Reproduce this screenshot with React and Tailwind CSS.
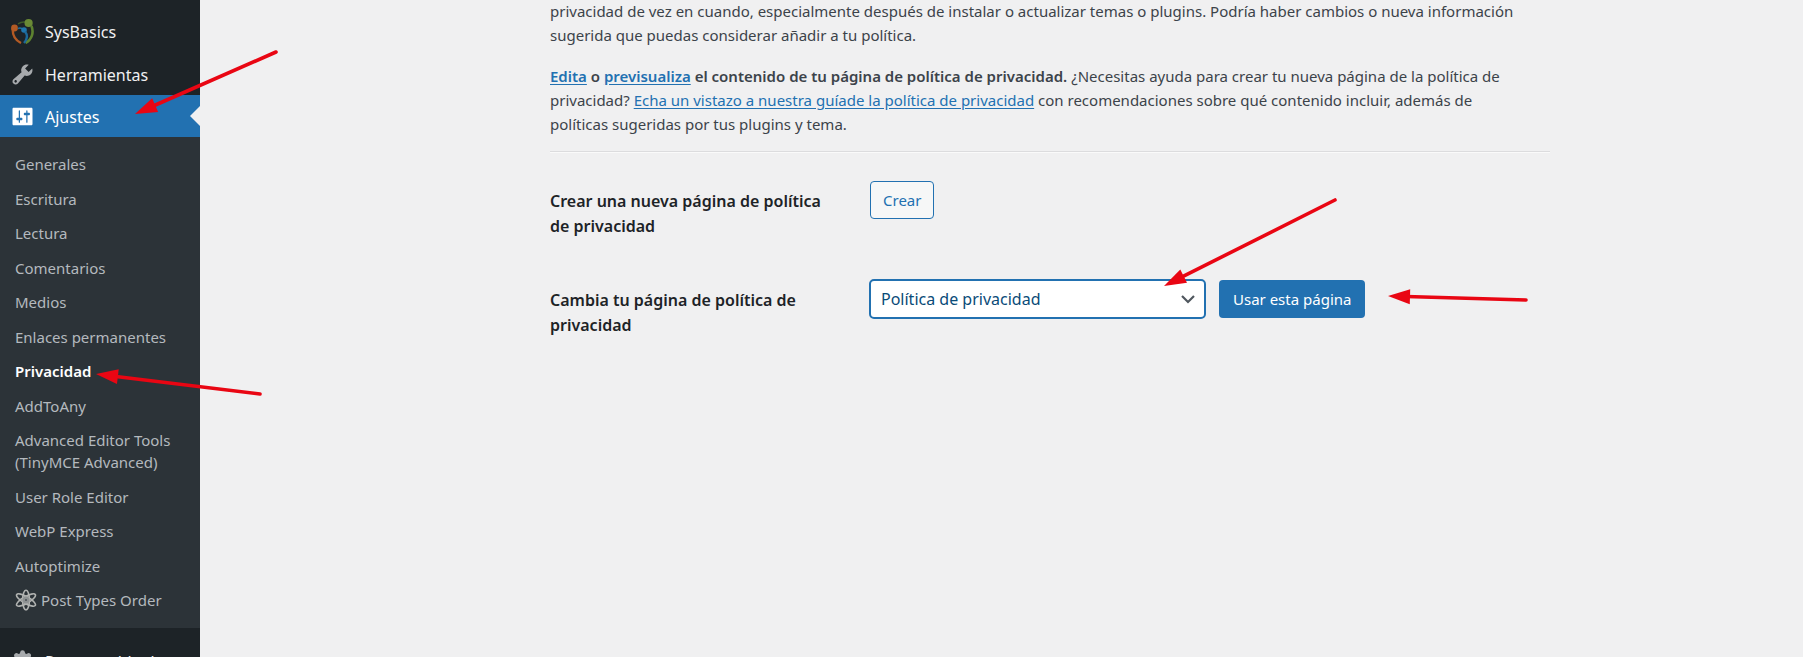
import React from 'react';

const submenu = [
  'Generales', 'Escritura', 'Lectura', 'Comentarios', 'Medios', 'Enlaces permanentes', 'Privacidad', 'AddToAny',
  'Advanced Editor Tools (TinyMCE Advanced)', 'User Role Editor', 'WebP Express', 'Autoptimize', 'Post Types Order',
];

function SysBasicsIcon() {
  return (
    <svg viewBox="0 0 24 26" className="h-[26px] w-6 shrink-0" fill="none" aria-hidden="true">
      <path d="M2.800 10C2.200 16.500 5 22 11 25" stroke="#b35a24" strokeWidth="2.400" />
      <circle cx="4.500" cy="10" r="3.400" fill="#b35a24" />
      <path d="M8 5.800C10.500 4.200 13.500 3.600 16 4.200" stroke="#3d5a2a" strokeWidth="1.500" />
      <circle cx="18.600" cy="5" r="4.100" fill="#6a8a35" />
      <path d="M21.500 8C24 14.500 22 21.500 15.500 25" stroke="#5d8230" strokeWidth="2.600" />
      <path d="M8 10.500C9.500 9.800 11 10 12.500 10.700" stroke="#1f6fa0" strokeWidth="1.500" />
      <circle cx="14" cy="12" r="2.800" fill="#2077ae" />
      <path d="M15 13.500C17.800 17 17.500 21 14 25" stroke="#1c689a" strokeWidth="2.400" />
    </svg>
  );
}

function WrenchIcon() {
  return (
    <svg viewBox="0 0 20 20" className="size-[25px] shrink-0 fill-[#a7aaad]" aria-hidden="true">
      <path d="M16.680 9.770c-1.340 1.340-3.300 1.670-4.950.990l-5.410 6.520c-.990.990-2.590.990-3.580 0s-.990-2.590 0-3.570l6.520-5.420c-.680-1.650-.350-3.610.990-4.950 1.280-1.280 3.120-1.620 4.720-1.060l-2.890 2.890 2.820 2.820 2.860-2.870c.530 1.580.180 3.390-1.080 4.650zM3.810 16.210c.400.390 1.040.390 1.430 0 .400-.400.400-1.040 0-1.430-.390-.400-1.030-.400-1.430 0-.390.390-.390 1.030 0 1.430z" />
    </svg>
  );
}

function SettingsIcon() {
  return (
    <svg viewBox="0 0 20 20" className="size-[25px] shrink-0 fill-white" aria-hidden="true">
      <path d="M18 16V4c0-.550-.450-1-1-1H3c-.550 0-1 .450-1 1v12c0 .550.450 1 1 1h14c.550 0 1-.450 1-1zM8 11h1c.550 0 1 .450 1 1s-.450 1-1 1H8v1.500c0 .280-.220.500-.500.500s-.500-.220-.500-.500V13H6c-.550 0-1-.450-1-1s.450-1 1-1h1V5.500c0-.280.220-.500.500-.500s.500.220.500.500V11zm5-2h-1c-.550 0-1-.450-1-1s.450-1 1-1h1V5.500c0-.280.220-.500.500-.500s.500.220.500.500V7h1c.550 0 1 .450 1 1s-.450 1-1 1h-1v5.500c0 .280-.220.500-.500.500s-.500-.220-.500-.500V9z" />
    </svg>
  );
}

function AtomIcon() {
  return (
    <svg viewBox="0 0 22 22" className="size-[22px] shrink-0" fill="none" stroke="#b1b3b1" strokeWidth="1.600" aria-hidden="true">
      <ellipse cx="11" cy="11" rx="3.400" ry="9.800" />
      <ellipse cx="11" cy="11" rx="3.400" ry="10.800" transform="rotate(60 11 11)" />
      <ellipse cx="11" cy="11" rx="3.400" ry="10.800" transform="rotate(-60 11 11)" />
      <circle cx="11" cy="11" r="3.600" fill="#8d9192" stroke="none" />
      <circle cx="11" cy="11" r="1" fill="#4a4f53" stroke="none" />
    </svg>
  );
}

function GearIcon() {
  return (
    <svg viewBox="0 0 20 20" className="size-[25px] shrink-0 fill-[#a7aaad]" aria-hidden="true">
      <path
        fillRule="evenodd"
        d="M10 1a2 2 0 0 1 2 1.800l.200.700 1 .400.700-.400a2 2 0 0 1 2.700 2.700l-.400.700.400 1 .700.200a2 2 0 0 1 0 3.900l-.700.200-.400 1 .400.700a2 2 0 0 1-2.700 2.700l-.700-.400-1 .400-.200.700a2 2 0 0 1-3.900 0l-.200-.700-1-.400-.700.400a2 2 0 0 1-2.700-2.700l.400-.700-.400-1-.700-.200a2 2 0 0 1 0-3.900l.700-.200.400-1-.400-.700a2 2 0 0 1 2.700-2.700l.700.400 1-.400.200-.700A2 2 0 0 1 10 1zm0 6a3 3 0 1 0 0 6 3 3 0 0 0 0-6z"
      />
    </svg>
  );
}

function MenuItem({ icon, label, current = false }) {
  return (
    <a
      href="#"
      aria-current={current ? 'true' : undefined}
      className={`relative flex h-[42px] items-center gap-[10px] pl-[10px] text-[16px] whitespace-nowrap ${current ? 'bg-[#2271b1] text-white' : 'text-[#f0f0f1]'}`}
    >
      <span className="flex w-[25px] shrink-0">{icon}</span>
      <span className="pt-px">{label}</span>
      {current && (
        <span className="absolute top-1/2 right-0 h-0 w-0 -translate-y-1/2 border-y-[10px] border-r-[10px] border-y-transparent border-r-[#f0f0f1]" />
      )}
    </a>
  );
}

function Sidebar() {
  return (
    <nav className="w-[200px] shrink-0 self-stretch bg-[#1d2327] pt-[10px]">
      <div className="pb-px">
        <MenuItem icon={<SysBasicsIcon />} label="SysBasics" />
      </div>
      <MenuItem icon={<WrenchIcon />} label="Herramientas" />
      <MenuItem icon={<SettingsIcon />} label="Ajustes" current />
      <ul className="bg-[#2c3338] pt-[10px] pb-[11px] text-[15px] leading-[22px]">
        {submenu.map((label) => (
          <li key={label} className="py-[6px] pr-4 pl-[15px] even:pt-[7px]">
            <a
              href="#"
              className={`flex items-center gap-1 ${label === 'Privacidad' ? 'font-semibold text-white' : 'text-[#b4b9be]'}`}
            >
              {label === 'Post Types Order' && <AtomIcon />}
              {label}
            </a>
          </li>
        ))}
      </ul>
      <div className="pt-[12px]">
        <MenuItem icon={<GearIcon />} label="Responsable de" />
      </div>
    </nav>
  );
}

function Arrow({ from, to }) {
  const [x1, y1] = from;
  const [x2, y2] = to;
  const length = Math.hypot(x2 - x1, y2 - y1);
  const angle = (Math.atan2(y2 - y1, x2 - x1) * 180) / Math.PI;
  return (
    <g transform={`translate(${x2} ${y2}) rotate(${angle})`}>
      <line x1={-length} y1="0" x2="-18" y2="0" stroke="#e90613" strokeWidth="3.600" strokeLinecap="round" />
      <path d="M0 0L-22-7.500V7.500Z" fill="#e90613" />
    </g>
  );
}

export default function App() {
  const link = 'text-[#2271b1] underline underline-offset-2';
  return (
    <div className="relative flex h-screen overflow-hidden bg-[#f0f0f1] font-['Noto_Sans',sans-serif] text-[#3c434a]">
      <Sidebar />
      <main className="flex min-w-0 flex-1 justify-center pl-[97px]">
        <div className="w-full max-w-[1000px] text-[15px] leading-6">
          <p className="-mt-px pr-5">
            privacidad de vez en cuando, especialmente después de instalar o actualizar temas o plugins. Podría haber
            cambios o nueva información sugerida que puedas considerar añadir a tu política.
          </p>
          <p className="mt-[17px] pr-5">
            <strong className="font-semibold">
              <a href="#" className={link}>Edita</a> o <a href="#" className={link}>previsualiza</a> el contenido de tu
              página de política de privacidad.
            </strong>{' '}
            ¿Necesitas ayuda para crear tu nueva página de la política de privacidad?{' '}
            <a href="#" className={link}>Echa un vistazo a nuestra guíade la política de privacidad</a> con
            recomendaciones sobre qué contenido incluir, además de políticas sugeridas por tus plugins y tema.
          </p>
          <hr className="mt-[15px] border-t border-b border-t-[#dcdcde] border-b-[#fafafa]" />
          <form onSubmit={(e) => e.preventDefault()}>
            <div className="flex items-start pt-[28px]">
              <h2 className="w-[320px] shrink-0 pt-[8px] pr-[32px] text-[16px] leading-[25px] font-semibold text-[#1d2327]">
                Crear una nueva página de política de privacidad
              </h2>
              <button type="submit" className="h-[38px] rounded-[4px] border border-[#2271b1] bg-[#f6f7f7] px-3 text-[15px] text-[#2271b1]">
                Crear
              </button>
            </div>
            <div className="flex items-start pt-[41px]">
              <label htmlFor="privacy-page" className="w-[320px] shrink-0 pt-[8px] pr-[32px] text-[16px] leading-[25px] font-semibold text-[#1d2327]">
                Cambia tu página de política de privacidad
              </label>
              <span className="-mt-px -ml-px grid w-[337px] items-center">
                <select
                  id="privacy-page"
                  className="col-start-1 row-start-1 h-10 appearance-none rounded-[5px] border-2 border-[#2271b1] bg-white pr-8 pl-[10px] text-[16px] text-[#0a4b78]"
                >
                  <option>Política de privacidad</option>
                </select>
                <svg viewBox="0 0 20 20" className="pointer-events-none col-start-1 row-start-1 mr-[8px] size-5 justify-self-end" aria-hidden="true">
                  <path d="M4 7l6 6 6-6" fill="none" stroke="#50575e" strokeWidth="2.200" />
                </svg>
              </span>
              <button type="submit" className="ml-[13px] h-[38px] rounded-[4px] bg-[#2271b1] px-[14px] text-[15px] text-white">
                Usar esta página
              </button>
            </div>
          </form>
        </div>
      </main>
      <svg className="pointer-events-none absolute inset-0 h-full w-full" aria-hidden="true">
        <Arrow from={[276, 52]} to={[135, 114]} />
        <Arrow from={[260, 394]} to={[96, 374]} />
        <Arrow from={[1335, 200]} to={[1164, 286]} />
        <Arrow from={[1526, 300]} to={[1388, 296]} />
      </svg>
    </div>
  );
}
